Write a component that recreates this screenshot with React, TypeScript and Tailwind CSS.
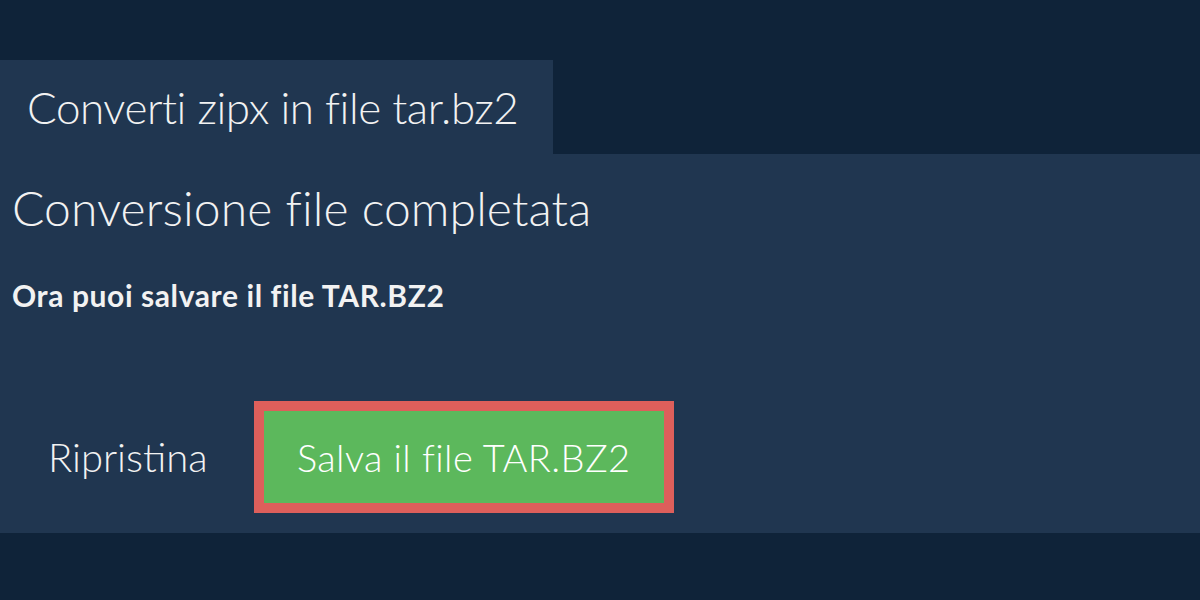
export default function App() {
  return (
    <div className="w-[1200px] h-[600px] bg-[#0f2339] text-[#f2f2f2] overflow-hidden" style={{ fontFamily: "Lato, 'Open Sans', sans-serif" }}>
      <div className="h-[60px]" />
      <div className="w-[553px] h-[94px] bg-[#203650] flex items-center pl-[27px]">
        <h1 className="text-[44px] font-light leading-none tracking-[-0.45px] whitespace-nowrap">Converti zipx in file tar.bz2</h1>
      </div>
      <div className="h-[379px] bg-[#203650] px-[12px] pt-[26px]">
        <h2 className="text-[48px] font-light leading-[56px] tracking-[0.1px] whitespace-nowrap">Conversione file completata</h2>
        <p className="mt-[44px] text-[30px] font-bold leading-[30px] tracking-[0.6px] whitespace-nowrap">Ora puoi salvare il file TAR.BZ2</p>
        <div className="mt-[91px] flex items-center">
          <button className="ml-[36px] text-[40px] font-light leading-none text-[#f2f2f2]">Ripristina</button>
          <button className="ml-[46px] border-[10px] border-[#dd5f5b] bg-[#5cb85c] w-[420px] h-[112px] text-[38px] font-light leading-none text-white tracking-[0.4px]">Salva il file TAR.BZ2</button>
        </div>
      </div>
    </div>
  );
}
